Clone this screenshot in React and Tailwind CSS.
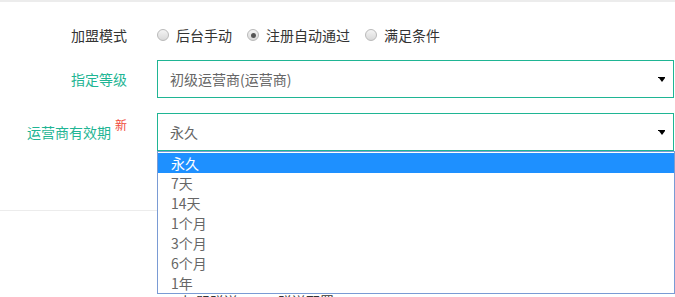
import React from 'react'

const FONT = { fontFamily: '"Microsoft YaHei", "Noto Sans CJK SC", "Noto Sans", sans-serif' }

const OPTIONS = ['永久', '7天', '14天', '1个月', '3个月', '6个月', '1年']

function Radio({ checked, label }) {
  return (
    <label className="flex items-center gap-[7px] mr-[15px]">
      <span className="w-[12px] h-[12px] rounded-full border border-[#b9b9b9] bg-gradient-to-b from-[#f4f4f4] to-[#d9d9d9] flex items-center justify-center">
        {checked && <span className="w-[5px] h-[5px] rounded-full bg-[#555]" />}
      </span>
      <span className="text-[14px] text-[#333]">{label}</span>
    </label>
  )
}

function Select({ value }) {
  return (
    <div className="w-[517px] h-[38px] border border-[#1fb594] flex items-center justify-between pl-[12px] pr-[8px] bg-white">
      <span className="text-[14px] text-[#666]">{value}</span>
      <span className="flex flex-col items-center">
        <span className="w-[7px] h-[1px] bg-black" />
        <span className="w-0 h-0 border-l-[3.5px] border-r-[3.5px] border-t-[4px] border-l-transparent border-r-transparent border-t-black" />
      </span>
    </div>
  )
}

export default function App() {
  return (
    <div className="relative w-[675px] h-[297px] overflow-hidden bg-white border-t-2 border-[#ececec]" style={FONT}>
      {/* 加盟模式 */}
      <div className="flex items-center mt-[22px] h-[22px]">
        <div className="w-[127px] text-right text-[14px] text-[#333]">加盟模式</div>
        <div className="flex items-center ml-[30px]">
          <Radio label="后台手动" />
          <Radio checked label="注册自动通过" />
          <Radio label="满足条件" />
        </div>
      </div>

      {/* 指定等级 */}
      <div className="flex items-center mt-[14px]">
        <div className="w-[127px] text-right text-[14px] text-[#1fb594]">指定等级</div>
        <div className="ml-[30px]"><Select value="初级运营商(运营商)" /></div>
      </div>

      {/* 运营商有效期 */}
      <div className="flex items-center mt-[15px]">
        <div className="w-[127px] flex justify-end items-start">
          <span className="text-[14px] text-[#1fb594] mt-[1px]">运营商有效期</span>
          <span className="text-[12px] text-[#f04a3a] ml-[4px] -mt-[5px]">新</span>
        </div>
        <div className="ml-[30px]"><Select value="永久" /></div>
      </div>

      {/* row beneath the open list */}
      <div className="mt-[59px] border-t border-[#ececec] w-[157px]" />
      <div className="flex items-center mt-[80px] ml-[182px] gap-[40px] text-[14px] text-[#333]">
        <span>加盟赠送</span>
        <span>赠送配置</span>
      </div>

      {/* open dropdown list */}
      <ul className="absolute left-[157px] top-[149px] w-[518px] h-[143px] border border-[#7a9bd4] bg-white pt-[1px]">
        {OPTIONS.map((o, i) => (
          <li
            key={o}
            className={`h-[20px] leading-[20px] pl-[13px] text-[14px] ${i === 0 ? 'bg-[#1e90ff] text-white' : 'text-[#666]'}`}
          >
            {o}
          </li>
        ))}
      </ul>
    </div>
  )
}
